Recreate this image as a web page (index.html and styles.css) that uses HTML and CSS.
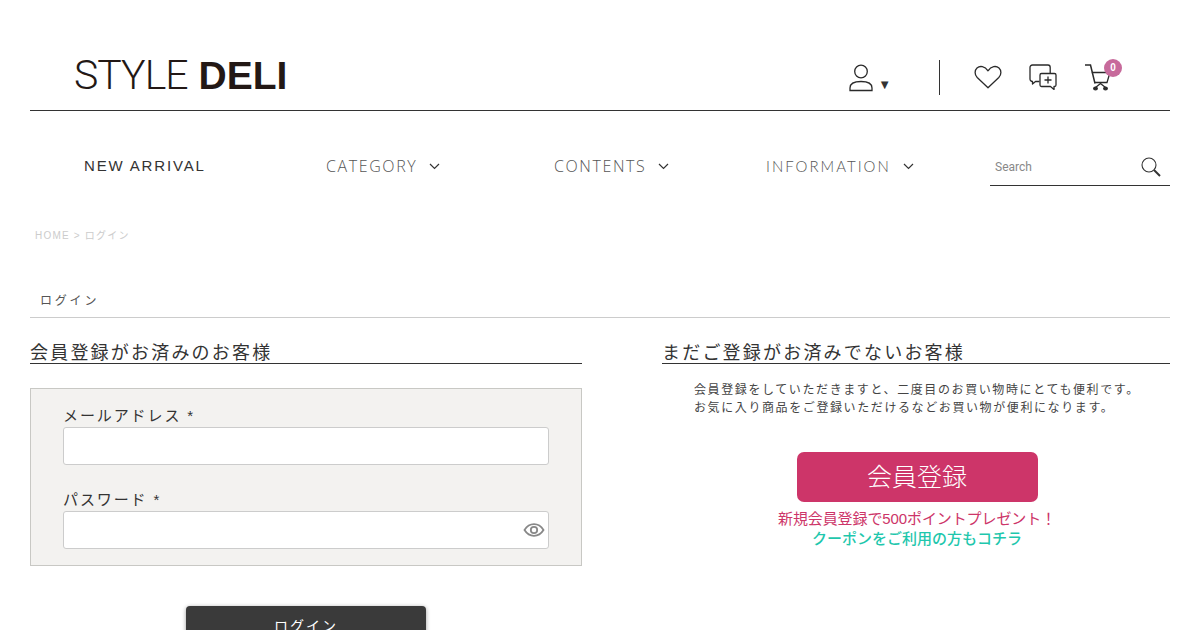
FILE: index.html
```html
<!DOCTYPE html>
<html lang="ja">
<head>
<meta charset="UTF-8" />
<meta name="viewport" content="width=device-width, initial-scale=1" />
<title>ログイン | STYLE DELI</title>
<link rel="stylesheet" href="styles.css">
</head>
<body>
  <!-- Header -->
  <header class="site-header">
    <a class="logo" href="#"><span class="logo-thin">STYLE</span> <b>DELI</b></a>
    <div class="header-icons">
      <a class="user-menu" href="#">
        <svg width="24" height="28" viewBox="0 0 24 28" fill="none" stroke="#2a2a2a" stroke-width="1.300"><circle cx="12" cy="7.500" r="6.300"/><path d="M1 26.500v-2.500c0-4 4-6.500 11-6.500s11 2.500 11 6.500v2.500z"/></svg>
        <span class="caret">▼</span>
      </a>
      <span class="divider"></span>
      <a href="#" class="icon-heart">
        <svg width="28" height="24" viewBox="0 0 28 24" fill="none" stroke="#2a2a2a" stroke-width="1.300" stroke-linejoin="round"><path d="M14 22.800 3.200 12.500C.3 9.500.6 5.300 3 3 5.800.5 10.800.9 14 5.800 17.200.9 22.200.5 25 3c2.400 2.300 2.700 6.500-.2 9.500z"/></svg>
      </a>
      <a href="#" class="icon-chat">
        <svg width="28" height="26" viewBox="0 0 28 26" fill="none" stroke="#2a2a2a" stroke-width="1.300" stroke-linejoin="round"><path d="M10.500 17.500H6.500l-3 2.500v-2.500C2 17.500 1 16.500 1 15V3.500C1 2 2 1 3.500 1H19c1.300 0 2.200 1 2.200 2.500v5.700"/><path d="M12.500 9.500h13c.9 0 1.500.6 1.500 1.500v10c0 .9-.6 1.500-1.500 1.500H25v3l-3.500-3h-9c-.9 0-1.500-.6-1.500-1.500V11c0-.9.6-1.500 1.500-1.500z"/><path d="M19 12.500v7M15.500 16h7"/></svg>
      </a>
      <a href="#" class="cart">
        <svg width="28" height="28" viewBox="0 0 28 28" fill="none" stroke="#2a2a2a" stroke-width="1.300"><path d="M0 1h5.500l4.500 18.500" stroke-width="1.500"/><path d="M6.800 8.500H25l-3 10H9.800"/><path d="M15.500 19.500l-5 4M15.500 19.500l5 4"/><ellipse cx="10.500" cy="24.500" rx="1.800" ry="1.300" fill="#2a2a2a"/><ellipse cx="20.500" cy="24.500" rx="1.800" ry="1.300" fill="#2a2a2a"/></svg>
        <span class="cart-count">0</span>
      </a>
    </div>
  </header>

  <!-- Global nav -->
  <nav class="global-nav">
    <a class="nav-new" href="#">NEW ARRIVAL</a>
    <a class="nav-item nav-category" href="#">CATEGORY <svg class="chev" width="11" height="7" viewBox="0 0 11 7" fill="none" stroke="#333" stroke-width="1.2"><path d="M1 1l4.500 4.500L10 1"/></svg></a>
    <a class="nav-item nav-contents" href="#">CONTENTS <svg class="chev" width="11" height="7" viewBox="0 0 11 7" fill="none" stroke="#333" stroke-width="1.2"><path d="M1 1l4.500 4.500L10 1"/></svg></a>
    <a class="nav-item nav-info" href="#">INFORMATION <svg class="chev" width="11" height="7" viewBox="0 0 11 7" fill="none" stroke="#333" stroke-width="1.2"><path d="M1 1l4.500 4.500L10 1"/></svg></a>
    <div class="search-box">
      <span>Search</span>
      <svg width="20" height="20" viewBox="0 0 20 20" fill="none" stroke="#333" stroke-width="1.1"><circle cx="8" cy="8" r="7"/><path d="M13 13l6 6" stroke-width="2"/></svg>
    </div>
  </nav>

  <p class="breadcrumb">HOME &gt; ログイン</p>

  <h1 class="page-title">ログイン</h1>

  <main class="login-columns">
    <section class="member-col">
      <h2 class="col-title">会員登録がお済みのお客様</h2>
      <div class="login-box">
        <label class="field-label">メールアドレス *</label>
        <div class="field"></div>
        <label class="field-label label-pass">パスワード *</label>
        <div class="field">
          <svg class="eye" width="22" height="14" viewBox="0 0 22 14" fill="none" stroke="#888" stroke-width="1.800"><path d="M1.500 7C4 3 7 1.200 11 1.200S18 3 20.500 7C18 11 15 12.800 11 12.800S4 11 1.500 7z"/><circle cx="11" cy="7" r="3.200"/></svg>
        </div>
      </div>
      <button class="login-btn">ログイン</button>
    </section>

    <section class="guest-col">
      <h2 class="col-title">まだご登録がお済みでないお客様</h2>
      <p class="guest-text">会員登録をしていただきますと、二度目のお買い物時にとても便利です。<br>お気に入り商品をご登録いただけるなどお買い物が便利になります。</p>
      <div class="signup">
        <a class="signup-btn" href="#">会員登録</a>
        <p class="signup-point">新規会員登録で500ポイントプレゼント！</p>
        <p class="signup-coupon">クーポンをご利用の方もコチラ</p>
      </div>
    </section>
  </main>
</body>
</html>
```

FILE: styles.css
```css
/* --- Reset and basics --- */
* {
  box-sizing: border-box;
  margin: 0;
  padding: 0;
}
html, body {
  height: 630px;
  overflow: hidden;
}
body {
  background: #fff;
  color: #333;
  font-family: "Liberation Sans", "Noto Sans CJK JP", sans-serif;
}
a {
  color: inherit;
  text-decoration: none;
}

/* --- Header --- */
.site-header {
  display: flex;
  justify-content: space-between;
  align-items: center;
  height: 81px;
  margin: 30px 30px 0;
  padding: 10px 57px 0 44px;
  border-bottom: 1px solid #333;
}
.logo {
  font-size: 39px;
  line-height: 50px;
  color: #231815;
}
.logo-thin {
  font-family: "Roboto", sans-serif;
  font-size: 41px;
  font-weight: 300;
  letter-spacing: -1px;
}
.header-icons {
  display: flex;
  align-items: center;
  margin-top: 4px;
}
.header-icons a {
  display: flex;
}
.user-menu {
  align-items: flex-end;
  margin-top: 1px;
}
.caret {
  margin-left: 5px;
  font-size: 13px;
  line-height: 14px;
  color: #333;
}
.divider {
  width: 1px;
  height: 35px;
  margin: 0 21px 0 48px;
  background: #333;
}
.icon-heart {
  margin-left: 13px;
}
.icon-chat {
  margin-left: 27px;
}
.cart {
  position: relative;
  margin-left: 28px;
  margin-top: 2px;
}
.cart-count {
  position: absolute;
  top: -5px;
  right: -9px;
  width: 18px;
  height: 18px;
  border-radius: 50%;
  background: #c76a9b;
  color: #fff;
  font-size: 10px;
  font-weight: 700;
  line-height: 18px;
  text-align: center;
}

/* --- Global nav --- */
.global-nav {
  display: flex;
  align-items: center;
  height: 110px;
  margin: 0 30px;
}
.nav-new {
  margin: 0 0 2px 54px;
  width: 242px;
  font-size: 15px;
  letter-spacing: 1.85px;
}
.nav-item {
  display: flex;
  align-items: center;
  color: #555;
  font-family: "Open Sans", sans-serif;
  font-weight: 300;
  font-size: 16px;
  letter-spacing: 1.6px;
}
.nav-item .chev {
  margin-left: 12px;
}
.nav-category { width: 228px; }
.nav-contents { width: 212px; }
.nav-info {
  width: 224px;
  font-family: "Lato", sans-serif;
  font-size: 15px;
  letter-spacing: 2px;
}
.search-box {
  display: flex;
  justify-content: space-between;
  align-items: center;
  width: 180px;
  height: 38px;
  margin-top: 2px;
  padding: 0 9px 0 5px;
  border-bottom: 1px solid #333;
  color: #888;
  font-family: "Roboto", sans-serif;
  font-size: 12px;
}

/* --- Breadcrumb and title --- */
.breadcrumb {
  margin: 8px 35px 0;
  font-size: 10px;
  line-height: 14px;
  letter-spacing: 1.2px;
  color: #ccc;
}
.page-title {
  margin: 49px 30px 0;
  padding: 0 10px 7px;
  border-bottom: 1px solid #ccc;
  font-size: 12px;
  font-weight: 400;
  line-height: 18px;
  letter-spacing: 2.8px;
  color: #555;
}

/* --- Two columns --- */
.login-columns {
  display: grid;
  grid-template-columns: 552px 508px;
  justify-content: space-between;
  margin: 25px 30px 0;
}
.col-title {
  border-bottom: 1px solid #333;
  font-size: 18px;
  font-weight: 400;
  line-height: 20px;
  letter-spacing: 2.2px;
  color: #333;
}

/* --- Login box --- */
.login-box {
  height: 178px;
  margin-top: 24px;
  padding: 17px 32px 0;
  border: 1px solid #c8c8c4;
  background: #f3f2f0;
}
.field-label {
  display: block;
  padding-bottom: 2px;
  font-size: 15px;
  line-height: 19px;
  letter-spacing: 1.9px;
}
.label-pass {
  margin-top: 25px;
}
.field {
  position: relative;
  height: 38px;
  border: 1px solid #ccc;
  border-radius: 3px;
  background: #fff;
}
.eye {
  position: absolute;
  top: 11px;
  right: 3px;
}
.login-btn {
  display: block;
  width: 240px;
  height: 38px;
  margin: 40px auto 0;
  border: none;
  border-radius: 4px;
  background: #3a3a3a;
  box-shadow: 0 1px 4px rgba(0, 0, 0, 0.4);
  color: #fff;
  font-family: inherit;
  font-size: 14px;
  letter-spacing: 2px;
}

/* --- Guest side --- */
.guest-text {
  margin: 17px 0 0 32px;
  font-size: 12px;
  line-height: 18px;
  letter-spacing: 1.6px;
  color: #444;
}
.signup {
  margin-top: 35px;
  text-align: center;
  width: 510px;
}
.signup-btn {
  display: block;
  width: 241px;
  height: 50px;
  margin: 0 auto 7px;
  border-radius: 7px;
  background: #cd3569;
  color: #fff;
  font-size: 25px;
  font-weight: 300;
  line-height: 50px;
}
.signup-point,
.signup-coupon {
  font-size: 15px;
  line-height: 20px;
}
.signup-point {
  letter-spacing: -0.1px;
  color: #cd3569;
}
.signup-coupon {
  color: #1fc7ad;
  font-weight: 500;
}
```
